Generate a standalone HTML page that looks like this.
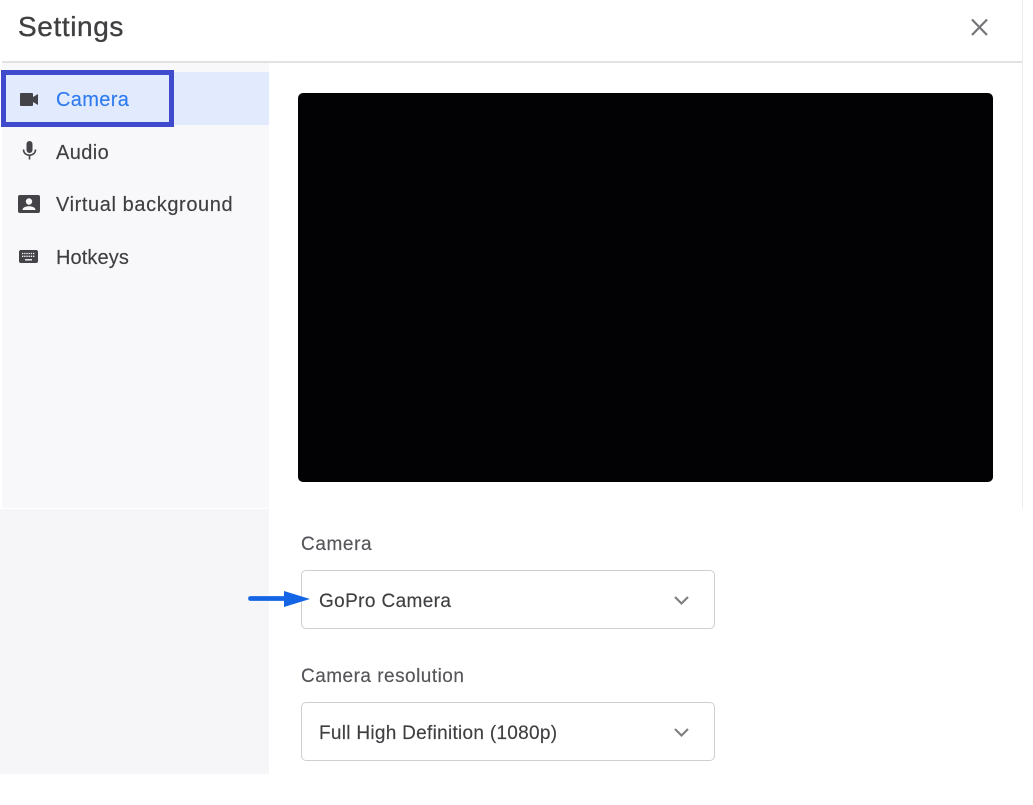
<!DOCTYPE html>
<html><head><meta charset="utf-8"><style>
html,body{margin:0;padding:0;width:1033px;height:805px;overflow:hidden;background:#fff}
body{font-family:"Liberation Sans",sans-serif;color:#3f3f42}
#w{position:absolute;left:0;top:0;width:1033px;height:805px;background:#fff;filter:blur(.35px)}
.a{position:absolute}
.t{position:absolute;white-space:nowrap;line-height:24px;font-size:20px;-webkit-text-stroke:.15px currentColor}
.sel{position:absolute;left:301px;width:412px;height:57px;border:1px solid #cfcfd1;border-radius:5px;background:#fff}
</style></head><body><div id="w">
<div class="a" style="left:2px;top:63px;width:267px;height:445px;background:#f8f8fb"></div>
<div class="a" style="left:0;top:509px;width:269px;height:265px;background:#f6f6f9"></div>
<div class="a" style="left:2px;top:61px;width:1020px;height:2px;background:#e2e2e2"></div>
<div class="a" style="left:1022px;top:0;width:1px;height:508px;background:#ececec"></div>
<div class="a" style="left:2px;top:72px;width:267px;height:53px;background:#e2ebfd"></div>
<div class="a" style="left:1px;top:70px;width:163px;height:47px;border:5px solid #3f4bcc"></div>

<div class="t" style="left:18px;top:13px;font-size:28px;line-height:28px;letter-spacing:.6px;-webkit-text-stroke:.35px currentColor">Settings</div>
<svg class="a" style="left:970px;top:18px" width="19" height="19" viewBox="0 0 19 19"><path d="M2 1.500L17 17M17 1.500L2 17" stroke="#757578" stroke-width="2.200" fill="none"/></svg>

<svg class="a" style="left:20px;top:93px" width="18" height="13" viewBox="0 0 18 13"><path d="M1 0h11a1 1 0 0 1 1 1v3l5-3v11l-5-3v3a1 1 0 0 1-1 1H1a1 1 0 0 1-1-1V1a1 1 0 0 1 1-1z" fill="#444448"/></svg>
<div class="t" style="left:56px;top:88px;color:#2f7bf0;letter-spacing:.35px">Camera</div>

<svg class="a" style="left:22px;top:141px" width="15" height="19" viewBox="0 0 15 19"><rect x="4.500" y="0" width="6" height="12" rx="3" fill="#444448"/><path d="M1.500 8.500c0 3.500 2.700 5.700 6 5.700s6-2.200 6-5.700M7.500 14v4.500" stroke="#444448" stroke-width="1.600" fill="none"/></svg>
<div class="t" style="left:56px;top:141px;letter-spacing:.4px">Audio</div>

<svg class="a" style="left:18px;top:195px" width="22" height="18" viewBox="0 0 22 18"><path d="M2 0h18a2 2 0 0 1 2 2v14a2 2 0 0 1-2 2H2a2 2 0 0 1-2-2V2a2 2 0 0 1 2-2z" fill="#444448"/><circle cx="11" cy="6.500" r="3.200" fill="#f8f8fb"/><path d="M4.500 15c0-2.800 3.500-3.800 6.500-3.800s6.500 1 6.500 3.800z" fill="#f8f8fb"/></svg>
<div class="t" style="left:56px;top:193px;letter-spacing:.6px">Virtual background</div>

<svg class="a" style="left:19px;top:250px" width="19" height="13" viewBox="0 0 19 13"><rect width="19" height="13" rx="2" fill="#444448"/><path d="M3 3.500h13M3 6.300h13" stroke="#f8f8fb" stroke-width="1.300" stroke-dasharray="1.300 .9"/><path d="M6 9.800h7" stroke="#f8f8fb" stroke-width="1.400"/></svg>
<div class="t" style="left:56px;top:246px;letter-spacing:.1px">Hotkeys</div>

<div class="a" style="left:298px;top:93px;width:695px;height:389px;background:#020204;border-radius:5px"></div>

<div class="t" style="left:301px;top:533px;font-size:19px;color:#55555a;letter-spacing:.6px">Camera</div>
<div class="sel" style="top:570px"></div>
<div class="t" style="left:319px;top:590px;font-size:19px;letter-spacing:.38px">GoPro Camera</div>
<svg class="a" style="left:673px;top:595px" width="17" height="11" viewBox="0 0 17 11"><path d="M2 2l6.500 6.500L15 2" stroke="#808083" stroke-width="2.200" fill="none"/></svg>

<div class="t" style="left:301px;top:665px;font-size:19px;color:#55555a;letter-spacing:.48px">Camera resolution</div>
<div class="sel" style="top:702px"></div>
<div class="t" style="left:319px;top:722px;font-size:19px;letter-spacing:.29px">Full High Definition (1080p)</div>
<svg class="a" style="left:673px;top:727px" width="17" height="11" viewBox="0 0 17 11"><path d="M2 2l6.500 6.500L15 2" stroke="#808083" stroke-width="2.200" fill="none"/></svg>

<svg class="a" style="left:248px;top:590px" width="64" height="18" viewBox="0 0 64 18"><path d="M2.500 8.500H38" stroke="#1465e6" stroke-width="4.800" stroke-linecap="round"/><path d="M36 1l26 8-26 8z" fill="#1465e6"/></svg>
</div></body></html>
